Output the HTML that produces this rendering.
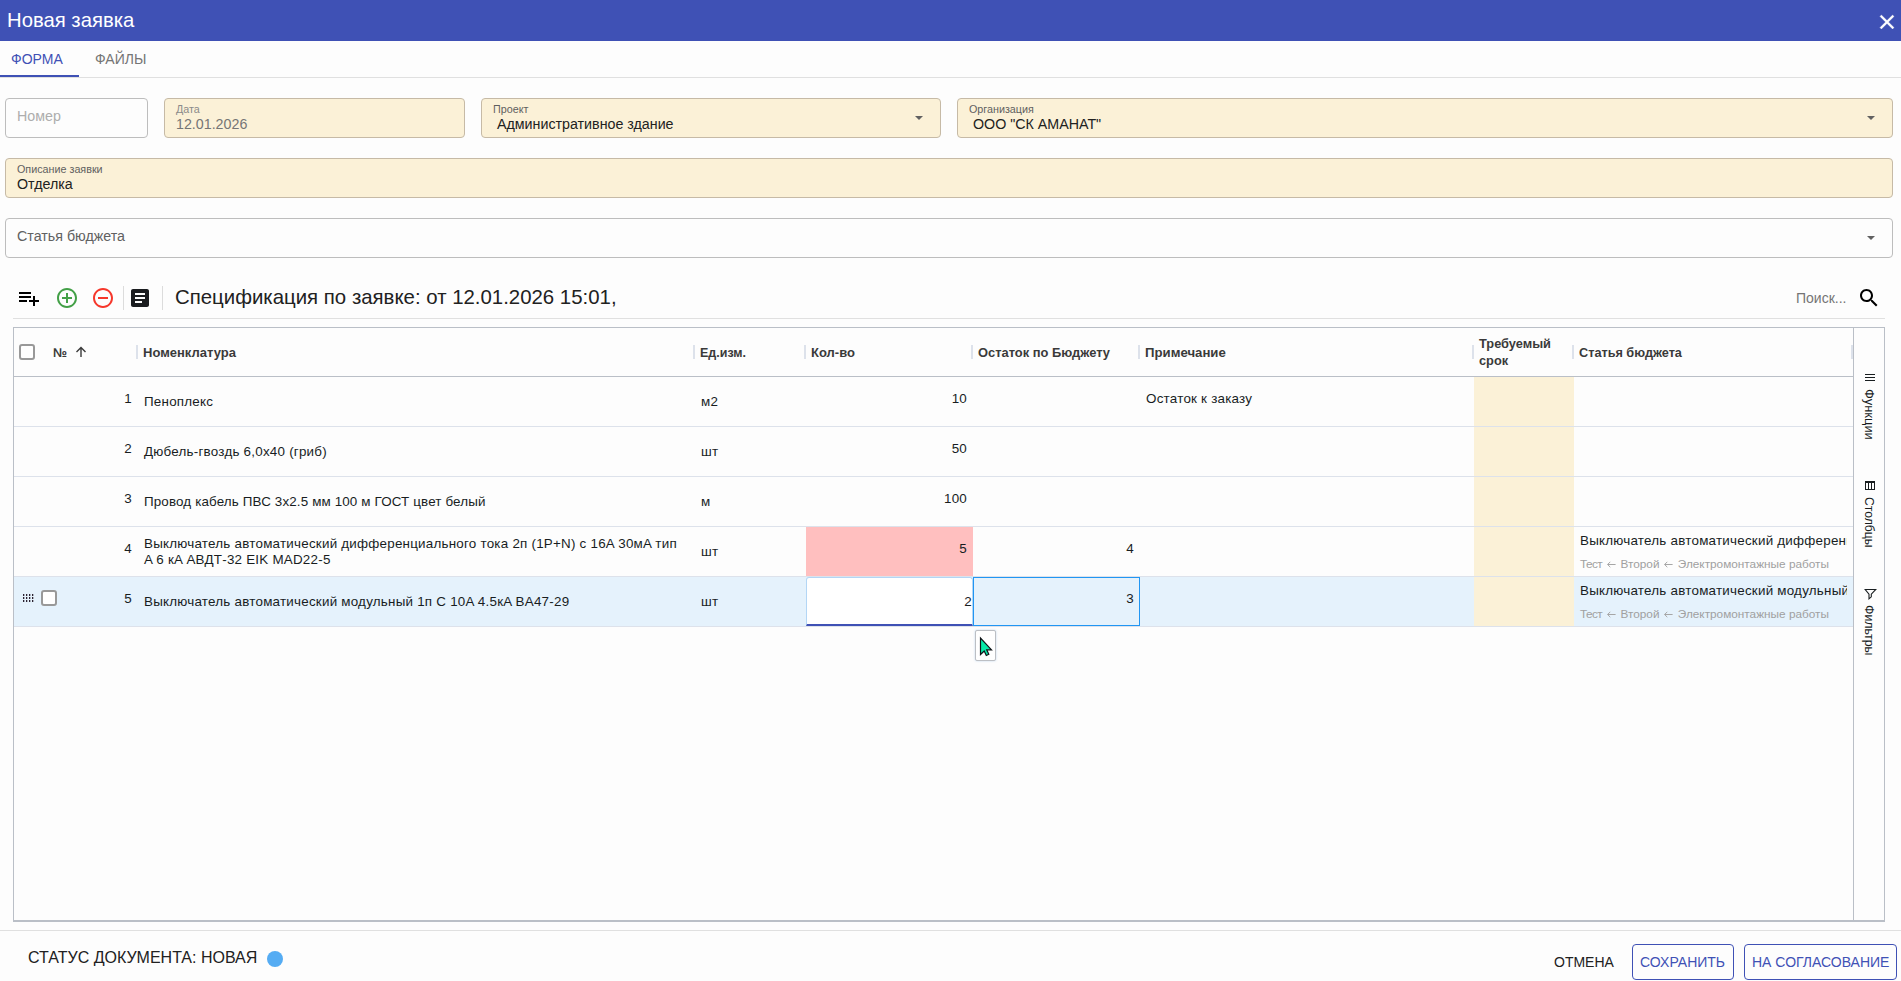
<!DOCTYPE html>
<html lang="ru">
<head>
<meta charset="utf-8">
<title>Новая заявка</title>
<style>
*{box-sizing:border-box;margin:0;padding:0}
html,body{width:1901px;height:981px;overflow:hidden;background:#fdfdfd}
body{font-family:"Liberation Sans",sans-serif;color:#212121;position:relative}
.abs{position:absolute}
#hdr{left:0;top:0;width:1901px;height:41px;background:#3f51b5}
#hdr .t{left:7px;top:8px;font-size:20.3px;line-height:24px;color:#fff;white-space:nowrap}
#tabs{left:0;top:41px;width:1901px;height:37px;border-bottom:1px solid #e0e0e0}
.tab{font-size:14px;line-height:16px;top:51px;white-space:nowrap}
#tabline{left:0;top:75px;width:79px;height:2px;background:#3f51b5}
.fld{border:1px solid #bdbdbd;border-radius:4px;height:40px}
.fld.y{background:#fbf1d7;border-color:#c6baa6}
.fld .lb{position:absolute;left:11px;top:4px;font-size:10.75px;line-height:13px;color:#5f5f5f;white-space:nowrap}
.fld .v{position:absolute;left:11px;top:17px;font-size:14.25px;line-height:16px;color:#212121;white-space:nowrap}
.fld .ph{position:absolute;left:11px;top:9px;font-size:14.25px;line-height:16px;color:#adadad;white-space:nowrap}
.fld .ar{position:absolute;right:17px;top:17px;width:0;height:0;border-left:4.5px solid transparent;border-right:4.5px solid transparent;border-top:4.5px solid #616161}
#tb-line{left:13px;top:318px;width:1872px;height:1px;background:#e0e0e0}
#grid{left:13px;top:327px;width:1872px;height:595px;border:1px solid #babfc7;border-bottom:2px solid #babfc7}
#ghead{left:0;top:0;width:1839px;height:49px;border-bottom:1px solid #babfc7}
.hc{position:absolute;margin-top:.5px;font-size:13px;line-height:16px;font-weight:bold;color:#3a3a3a;white-space:nowrap}
.hs{position:absolute;top:17px;width:2px;height:14px;background:#dde2eb}
.row{position:absolute;left:0;width:1839px;height:50px;border-bottom:1px solid #dde2eb}
.c{position:absolute;font-size:13.4px;letter-spacing:.23px;line-height:16px;color:#181d1f;white-space:nowrap}
.clip{overflow:hidden}
.yc{position:absolute;left:1460px;top:0;width:100px;height:49px;background:#fbf1d7}
.row.sel{background:#e5f2fc}
.cb{position:absolute;width:16px;height:16px;border:2px solid #999;border-radius:3px;background:#fff}
.sub{color:#a0a0a0;font-size:11.8px;letter-spacing:0}
.ar2{display:inline-block;margin:0 4.600px 0 4.700px;vertical-align:baseline}
.r{text-align:right}
#side{left:1839px;top:0;width:32px;height:592px;border-left:1px solid #babfc7}
.vt{position:absolute;left:7px;width:16px;writing-mode:vertical-rl;font-size:12.4px;line-height:16px;white-space:nowrap;color:#181d1f}
#foot-line{left:0;top:930px;width:1901px;height:1px;background:#e0e0e0}
.btn{font-size:14px;line-height:16px;white-space:nowrap}
.ob{border:1px solid #3f51b5;border-radius:4px;color:#3f51b5;height:36px}
</style>
</head>
<body>
<!-- header -->
<div id="hdr" class="abs"><div class="t abs">Новая заявка</div>
<svg class="abs" style="left:1875px;top:10px" width="24" height="24" viewBox="0 0 24 24"><path fill="#fff" stroke="#fff" stroke-width=".35" d="M19 6.410L17.590 5 12 10.590 6.410 5 5 6.410 10.590 12 5 17.590 6.410 19 12 13.410 17.590 19 19 17.590 13.410 12z"/></svg>
</div>
<!-- tabs -->
<div id="tabs" class="abs"></div>
<div class="tab abs" style="left:11px;color:#3f51b5">ФОРМА</div>
<div class="tab abs" style="left:95px;color:#757575">ФАЙЛЫ</div>
<div id="tabline" class="abs"></div>

<!-- fields row 1 -->
<div class="fld abs" style="left:5px;top:98px;width:143px"><div class="ph">Номер</div></div>
<div class="fld y abs" style="left:164px;top:98px;width:301px"><div class="lb" style="color:#8a8a8a">Дата</div><div class="v" style="color:#757575">12.01.2026</div></div>
<div class="fld y abs" style="left:481px;top:98px;width:460px"><div class="lb">Проект</div><div class="v" style="left:15px">Административное здание</div><div class="ar"></div></div>
<div class="fld y abs" style="left:957px;top:98px;width:936px"><div class="lb">Организация</div><div class="v" style="left:15px">ООО "СК АМАНАТ"</div><div class="ar"></div></div>
<!-- row 2 -->
<div class="fld y abs" style="left:5px;top:158px;width:1888px"><div class="lb">Описание заявки</div><div class="v">Отделка</div></div>
<!-- row 3 -->
<div class="fld abs" style="left:5px;top:218px;width:1888px"><div class="ph" style="color:#616161">Статья бюджета</div><div class="ar"></div></div>

<!-- toolbar -->
<div id="toolbar" class="abs" style="left:0;top:280px;width:1901px;height:38px">
<svg class="abs" style="left:17px;top:6px" width="24" height="24" viewBox="0 0 24 24"><path fill="#000" d="M14 10H2v2h12v-2zm0-4H2v2h12V6zm4 8v-4h-2v4h-4v2h4v4h2v-4h4v-2h-4zM2 16h8v-2H2v2z"/></svg>
<svg class="abs" style="left:55px;top:6px" width="24" height="24" viewBox="0 0 24 24"><path fill="#43a047" d="M13 7h-2v4H7v2h4v4h2v-4h4v-2h-4V7zm-1-5C6.48 2 2 6.48 2 12s4.48 10 10 10 10-4.48 10-10S17.52 2 12 2zm0 18c-4.41 0-8-3.59-8-8s3.59-8 8-8 8 3.59 8 8-3.590 8-8 8z"/></svg>
<svg class="abs" style="left:91px;top:6px" width="24" height="24" viewBox="0 0 24 24"><path fill="#f6372b" d="M7 11v2h10v-2H7zm5-9C6.48 2 2 6.48 2 12s4.48 10 10 10 10-4.48 10-10S17.52 2 12 2zm0 18c-4.41 0-8-3.59-8-8s3.59-8 8-8 8 3.59 8 8-3.59 8-8 8z"/></svg>
<div class="abs" style="left:123px;top:6px;width:1px;height:24px;background:#dcdcdc"></div>
<svg class="abs" style="left:128px;top:6px" width="24" height="24" viewBox="0 0 24 24"><path fill="#1a1c1f" d="M19 3H5c-1.1 0-2 .9-2 2v14c0 1.1.9 2 2 2h14c1.1 0 2-.9 2-2V5c0-1.1-.9-2-2-2zm-5 14H7v-2h7v2zm3-4H7v-2h10v2zm0-4H7V7h10v2z"/></svg>
<div class="abs" style="left:162px;top:6px;width:1px;height:24px;background:#dcdcdc"></div>
<svg class="abs" style="left:1857px;top:6px" width="24" height="24" viewBox="0 0 24 24"><path fill="#000" d="M15.5 14h-.79l-.28-.27C15.41 12.59 16 11.11 16 9.500 16 5.910 13.090 3 9.500 3S3 5.910 3 9.500 5.910 16 9.500 16c1.610 0 3.090-.59 4.230-1.570l.27.28v.79l5 4.990L20.490 19l-4.990-5zm-6 0C7.010 14 5 11.990 5 9.500S7.010 5 9.500 5 14 7.010 14 9.500 11.990 14 9.500 14z"/></svg>
</div>
<div class="abs" style="left:175px;top:285px;font-size:20.4px;line-height:24px;color:#212121;white-space:nowrap">Спецификация по заявке: от 12.01.2026 15:01,</div>
<div class="abs" style="left:1796px;top:290px;font-size:14px;line-height:16px;color:#757575;white-space:nowrap">Поиск...</div>
<div id="tb-line" class="abs"></div>

<!-- grid -->
<div id="grid" class="abs">
 <div id="ghead" class="abs">
  <div class="cb" style="left:5px;top:16px"></div>
  <div class="hc" style="left:39px;top:16px;font-size:12.6px">№</div>
  <svg class="abs" style="left:61px;top:18px" width="12" height="12" viewBox="0 0 12 12"><path d="M6 11V1.500M1.500 6L6 1.500L10.500 6" stroke="#3a3a3a" stroke-width="1.4" fill="none"/></svg>
  <div class="hc" style="left:129px;top:16px">Номенклатура</div>
  <div class="hc" style="left:686px;top:16px;font-size:12.5px">Ед.изм.</div>
  <div class="hc" style="left:797px;top:16px">Кол-во</div>
  <div class="hc" style="left:964px;top:16px;font-size:12.9px">Остаток по Бюджету</div>
  <div class="hc" style="left:1131px;top:16px;font-size:13.2px">Примечание</div>
  <div class="hc" style="left:1465px;top:6px;line-height:17px;font-size:12.8px">Требуемый<br>срок</div>
  <div class="hc" style="left:1565px;top:16px;font-size:12.7px">Статья бюджета</div>
  <div class="hs" style="left:122px"></div>
  <div class="hs" style="left:679px"></div>
  <div class="hs" style="left:790px"></div>
  <div class="hs" style="left:957px"></div>
  <div class="hs" style="left:1124px"></div>
  <div class="hs" style="left:1458px"></div>
  <div class="hs" style="left:1558px"></div>
  <div class="hs" style="left:1837px"></div>
 </div>

 <!-- rows -->
 <div class="row" style="top:49px">
  <div class="c r" style="left:60px;width:58px;top:14px">1</div>
  <div class="c" style="left:130px;top:17px">Пеноплекс</div>
  <div class="c" style="left:687px;top:17px">м2</div>
  <div class="c r" style="left:800px;width:153px;top:14px">10</div>
  <div class="c" style="left:1132px;top:14px">Остаток к заказу</div>
  <div class="yc"></div>
 </div>
 <div class="row" style="top:99px">
  <div class="c r" style="left:60px;width:58px;top:14px">2</div>
  <div class="c" style="left:130px;top:17px">Дюбель-гвоздь 6,0х40 (гриб)</div>
  <div class="c" style="left:687px;top:17px">шт</div>
  <div class="c r" style="left:800px;width:153px;top:14px">50</div>
  <div class="yc"></div>
 </div>
 <div class="row" style="top:149px">
  <div class="c r" style="left:60px;width:58px;top:14px">3</div>
  <div class="c" style="left:130px;top:17px;letter-spacing:.14px">Провод кабель ПВС 3х2.5 мм 100 м ГОСТ цвет белый</div>
  <div class="c" style="left:687px;top:17px">м</div>
  <div class="c r" style="left:800px;width:153px;top:14px">100</div>
  <div class="yc"></div>
 </div>
 <div class="row" style="top:199px">
  <div class="c r" style="left:60px;width:58px;top:14px">4</div>
  <div class="c" style="left:130px;top:9px">Выключатель автоматический дифференциального тока 2п (1P+N) с 16A 30мA тип<br>A 6 кA АВДТ-32 EIK MAD22-5</div>
  <div class="c" style="left:687px;top:17px">шт</div>
  <div class="abs" style="left:792px;top:0;width:167px;height:49px;background:#ffbfbf"></div>
  <div class="c r" style="left:800px;width:153px;top:14px">5</div>
  <div class="c r" style="left:967px;width:153px;top:14px">4</div>
  <div class="yc"></div>
  <div class="c clip" style="left:1566px;top:6px;width:267px">Выключатель автоматический дифференциального тока</div>
  <div class="c sub" style="left:1566px;top:29px"><span style="letter-spacing:-.55px">Тест</span><svg class="ar2" width="9" height="7" viewBox="0 0 9 7"><path d="M.6 3.500H8.600M3.300 .8L.6 3.500L3.300 6.200" stroke="#a6a6a6" stroke-width="1" fill="none"/></svg>Второй<svg class="ar2" width="9" height="7" viewBox="0 0 9 7"><path d="M.6 3.500H8.600M3.300 .8L.6 3.500L3.300 6.200" stroke="#a6a6a6" stroke-width="1" fill="none"/></svg>Электромонтажные работы</div>
 </div>
 <div class="row sel" style="top:249px">
  <svg class="abs" style="left:9px;top:17px" width="11" height="8" viewBox="0 0 11 8"><g fill="#2b2230"><rect x="0" y="0" width="1.300" height="2"/><rect x="3" y="0" width="1.300" height="2"/><rect x="6" y="0" width="1.300" height="2"/><rect x="9" y="0" width="1.300" height="2"/><rect x="0" y="3" width="1.300" height="2"/><rect x="3" y="3" width="1.300" height="2"/><rect x="6" y="3" width="1.300" height="2"/><rect x="9" y="3" width="1.300" height="2"/><rect x="0" y="6" width="1.300" height="2"/><rect x="3" y="6" width="1.300" height="2"/><rect x="6" y="6" width="1.300" height="2"/><rect x="9" y="6" width="1.300" height="2"/></g></svg>
  <div class="cb" style="left:27px;top:13px"></div>
  <div class="c r" style="left:60px;width:58px;top:14px">5</div>
  <div class="c" style="left:130px;top:17px">Выключатель автоматический модульный 1п C 10A 4.5кA BA47-29</div>
  <div class="c" style="left:687px;top:17px">шт</div>
  <div class="abs" style="left:792px;top:0;width:167px;height:49px;background:#fff;border:1px solid #b3d6f5;border-bottom:2px solid #3f51b5;border-radius:3px 3px 0 0"></div>
  <div class="c r" style="left:800px;width:158px;top:17px">2</div>
  <div class="abs" style="left:959px;top:0;width:167px;height:49px;border:1px solid #2196f3"></div>
  <div class="c r" style="left:967px;width:153px;top:14px">3</div>
  <div class="yc"></div>
  <div class="c clip" style="left:1566px;top:6px;width:267px">Выключатель автоматический модульный 1п C 10A</div>
  <div class="c sub" style="left:1566px;top:29px"><span style="letter-spacing:-.55px">Тест</span><svg class="ar2" width="9" height="7" viewBox="0 0 9 7"><path d="M.6 3.500H8.600M3.300 .8L.6 3.500L3.300 6.200" stroke="#a6a6a6" stroke-width="1" fill="none"/></svg>Второй<svg class="ar2" width="9" height="7" viewBox="0 0 9 7"><path d="M.6 3.500H8.600M3.300 .8L.6 3.500L3.300 6.200" stroke="#a6a6a6" stroke-width="1" fill="none"/></svg>Электромонтажные работы</div>
 </div>
 <!-- cursor tip -->
 <div class="abs" style="left:961px;top:302px;width:21px;height:31px;border:1px solid #bcbfc4;border-radius:2px;background:#fff;box-shadow:0 0 2px rgba(120,170,220,.5)"></div>
 <svg class="abs" style="left:965px;top:308px" width="15" height="22" viewBox="0 0 15 22"><path d="M1.500 2 L1.500 18.500 L5.200 15 L7.300 19.500 L9.800 18.300 L7.700 13.800 L12.500 13.800 Z" fill="#08eaa8" stroke="#101418" stroke-width="1.200" stroke-linejoin="miter"/></svg>
 <div id="side" class="abs">
  <svg class="abs" style="left:11px;top:46px" width="10" height="7" viewBox="0 0 10 7" shape-rendering="crispEdges"><g fill="#181d1f"><rect x="0" y="0" width="10" height="1"/><rect x="0" y="3" width="10" height="1"/><rect x="0" y="6" width="10" height="1"/></g></svg>
  <div class="vt" style="top:61px;font-size:12.9px">Функции</div>
  <svg class="abs" style="left:11px;top:153px" width="10" height="9" viewBox="0 0 10 9" shape-rendering="crispEdges"><g fill="#181d1f"><rect x="0" y="0" width="10" height="2"/><rect x="0" y="8" width="10" height="1"/><rect x="0" y="0" width="1" height="9"/><rect x="3" y="0" width="1" height="9"/><rect x="6" y="0" width="1" height="9"/><rect x="9" y="0" width="1" height="9"/></g></svg>
  <div class="vt" style="top:169px;font-size:12.2px">Столбцы</div>
  <svg class="abs" style="left:10px;top:260px" width="13" height="12" viewBox="0 0 13 12"><path d="M1.200 1.500H11.800L7.300 6.200V8.800L5 10.800V6.200Z" stroke="#181d1f" stroke-width="1.100" fill="none" stroke-linejoin="miter"/></svg>
  <div class="vt" style="top:277px;font-size:12.4px">Фильтры</div>
 </div>
</div>

<!-- footer -->
<div id="foot-line" class="abs"></div>
<div class="abs" style="left:28px;top:949px;font-size:16px;line-height:18px;white-space:nowrap;color:#212121">СТАТУС ДОКУМЕНТА: НОВАЯ</div>
<div class="abs" style="left:267px;top:951px;width:16px;height:16px;border-radius:50%;background:#55acf3"></div>
<div class="btn abs" style="left:1554px;top:954px;color:#212121">ОТМЕНА</div>
<div class="ob abs" style="left:1632px;top:944px;width:102px"></div>
<div class="btn abs" style="left:1640px;top:954px;color:#3f51b5">СОХРАНИТЬ</div>
<div class="ob abs" style="left:1744px;top:944px;width:153px"></div>
<div class="btn abs" style="left:1752px;top:954px;color:#3f51b5">НА СОГЛАСОВАНИЕ</div>
</body>
</html>
